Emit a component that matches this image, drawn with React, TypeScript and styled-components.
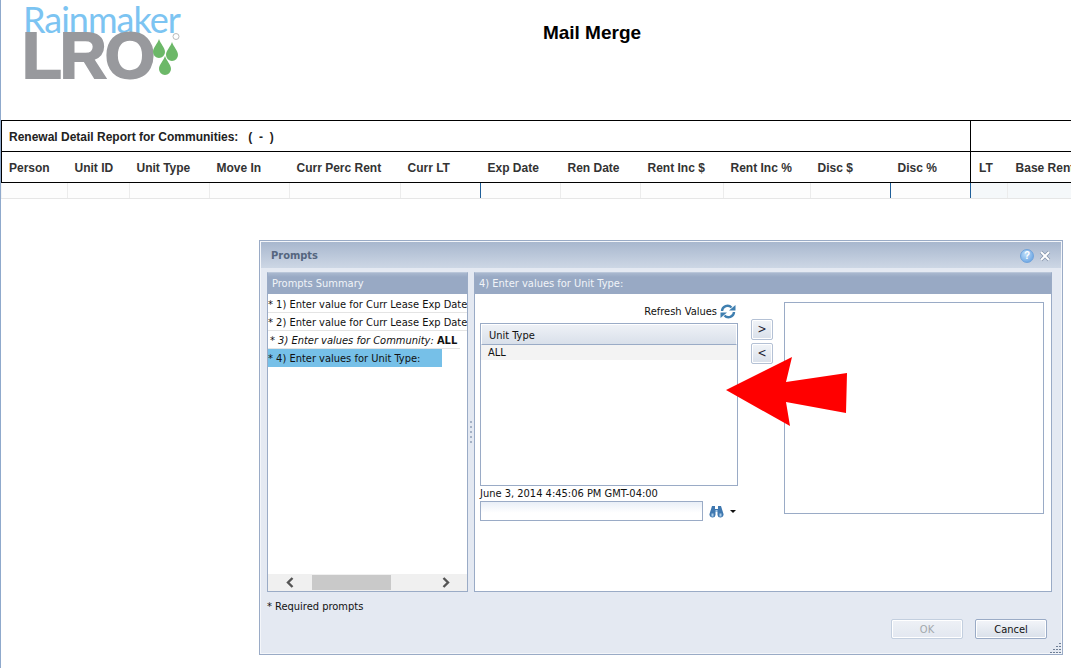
import React from 'react';
import styled, { createGlobalStyle } from 'styled-components';

const GlobalStyle = createGlobalStyle`
  html, body {
    margin: 0;
    padding: 0;
    background: #fff;
    overflow: hidden;
  }
`;

const Page = styled.div`
  position: relative;
  width: 1071px;
  height: 668px;
  box-sizing: border-box;
  border-left: 1px solid #8fa9cc;
  overflow: hidden;
  font-family: 'DejaVu Sans', 'Liberation Sans', sans-serif;
`;

const Header = styled.header`
  display: flex;
  height: 120px;
  box-sizing: border-box;
  padding: 5px 0 0 24px;
`;

const Logo = styled.div`
  width: 160px;
  flex: none;
`;

const LogoTop = styled.div`
  margin-left: -2px;
  font: 400 36px/28px 'Lato', sans-serif;
  color: #7cc4f2;
  letter-spacing: -1px;
  white-space: nowrap;
`;

const LogoBottom = styled.div`
  display: flex;
  align-items: flex-start;
  height: 46px;
`;

const LogoMark = styled.div`
  margin-left: -3px;
  font: 700 65px/46px 'Liberation Sans', sans-serif;
  color: #98999d;
  letter-spacing: -1.9px;
  -webkit-text-stroke: 2px #98999d;
`;

const Drops = styled.svg`
  flex: none;
  width: 32px;
  height: 48px;
  margin-left: -2px;
`;

const Title = styled.h1`
  margin: 17px 0 0 0;
  width: 814px;
  text-align: center;
  font: 700 19px/22px 'Liberation Sans', sans-serif;
  color: #000;
`;

const ReportWrap = styled.div`
  width: 1070px;
  overflow: hidden;
`;

const Report = styled.table`
  width: 1157px;
  table-layout: fixed;
  border-collapse: collapse;
  font: 700 12px/16px 'Liberation Sans', sans-serif;
  color: #333;
`;

const TitleCell = styled.td`
  height: 28px;
  padding: 2px 0 0 7px;
  border: 1px solid #000;
  color: #222;
  white-space: pre;
`;

const HeadCell = styled.td<{ $first?: boolean; $split?: boolean; $tail?: boolean }>`
  height: 28px;
  padding: 2px 0 0 ${(p) => (p.$tail ? '8px' : '7px')};
  border-bottom: 1px solid #000;
  border-left: ${(p) => (p.$first || p.$split ? '1px solid #000' : 'none')};
  white-space: nowrap;
`;

const DataCell = styled.td<{ $mark?: boolean; $tint?: boolean; $first?: boolean }>`
  height: 15px;
  padding: 0;
  border-bottom: 1px solid #e6e6e6;
  border-left: 1px solid ${(p) => (p.$first ? '#f4f4f4' : p.$mark ? '#1f5f99' : '#ececec')};
  background: ${(p) => (p.$tint ? '#f5f8fa' : '#fdfdfd')};
`;

const Dialog = styled.section`
  display: flex;
  flex-direction: column;
  box-sizing: border-box;
  width: 804px;
  height: 415px;
  margin: 41px 0 0 258px;
  border: 1px solid #9aabc6;
  background: #e4e9f2;
  box-shadow: inset 0 0 0 1px #f4f6fa;
  font: 400 11px/14px 'DejaVu Sans', 'Liberation Sans', sans-serif;
  font-stretch: condensed;
  color: #111;
`;

const DialogBar = styled.div`
  display: flex;
  align-items: center;
  box-sizing: border-box;
  height: 26px;
  flex: none;
  margin: 1px 1px 0;
  padding: 1px 10px 0;
  background: linear-gradient(#a8b7ce, #cdd7e5);
`;

const DialogTitle = styled.div`
  flex: 1;
  font-weight: 700;
  color: #55667f;
`;

const HelpIcon = styled.div`
  width: 12px;
  height: 12px;
  border-radius: 50%;
  margin-right: 5px;
  border: 1px solid #6fa3dc;
  background: radial-gradient(circle at 40% 35%, #bcdcf8, #5b9be0);
  color: #fff;
  font: 700 10px/12px 'Liberation Sans', sans-serif;
  text-align: center;
`;

const Panels = styled.div`
  display: flex;
  gap: 6px;
  height: 320px;
  margin: 4px 0 0 7px;
`;

const Panel = styled.div<{ $width: number }>`
  display: flex;
  flex-direction: column;
  box-sizing: border-box;
  width: ${(p) => p.$width}px;
  border: 1px solid #9aabc6;
  border-top-color: #b9c6d9;
  background: #fff;
`;

const PanelHead = styled.div`
  height: 21px;
  flex: none;
  padding-left: 4px;
  background: linear-gradient(#a9b8cf 0, #98a9c4 4px);
  color: #f1f4f8;
  line-height: 21px;
`;

const PromptList = styled.div`
  flex: 1;
  padding-top: 1px;
`;

const PromptRow = styled.div<{ $selected?: boolean; $italic?: boolean }>`
  box-sizing: border-box;
  height: 18px;
  width: ${(p) => (p.$selected ? '174px' : p.$italic ? '192px' : '199px')};
  padding-left: ${(p) => (p.$italic ? '2px' : '0')};
  line-height: 19px;
  white-space: nowrap;
  overflow: hidden;
  background: ${(p) => (p.$selected ? '#76c0e8' : 'transparent')};
  border-bottom: 1px solid ${(p) => (p.$selected ? '#76c0e8' : '#e4e4e4')};
  font-style: ${(p) => (p.$italic ? 'italic' : 'normal')};
`;

const AllValue = styled.b`
  font-style: normal;
`;

const ScrollBar = styled.div`
  display: flex;
  align-items: center;
  height: 17px;
  flex: none;
  background: #f0f0f0;
`;

const ScrollThumb = styled.div`
  width: 79px;
  height: 15px;
  margin-left: 16px;
  background: #c9c9c9;
`;

const ScrollArrow = styled.svg<{ $gap: number }>`
  flex: none;
  margin-left: ${(p) => p.$gap}px;
  width: 11px;
  height: 11px;
`;

const Splitter = styled.svg`
  position: absolute;
  left: 468px;
  top: 420px;
  width: 5px;
  height: 26px;
`;

const ValueArea = styled.div`
  display: flex;
  flex: 1;
  padding-left: 5px;
`;

const PickColumn = styled.div`
  width: 258px;
  flex: none;
`;

const RefreshRow = styled.div`
  display: flex;
  align-items: center;
  justify-content: flex-end;
  gap: 3px;
  height: 27px;
  padding: 4px 2px 0 0;
  box-sizing: border-box;
  margin-top: 2px;
`;

const ListBox = styled.div`
  box-sizing: border-box;
  height: 163px;
  border: 1px solid #9aabc6;
`;

const ListHead = styled.div`
  box-sizing: border-box;
  height: 21px;
  padding-left: 7px;
  border: 1px solid #fff;
  border-bottom: 1px solid #9aabc6;
  background: linear-gradient(#eef1f6, #d9e0ea);
  line-height: 21px;
`;

const ListRow = styled.div`
  height: 15px;
  padding-left: 7px;
  background: #f3f3f3;
  line-height: 16px;
`;

const Stamp = styled.div`
  height: 15px;
  line-height: 15px;
  white-space: nowrap;
`;

const SearchRow = styled.div`
  display: flex;
  align-items: center;
`;

const SearchInput = styled.div`
  box-sizing: border-box;
  width: 223px;
  height: 20px;
  border: 1px solid #9aabc6;
  background: linear-gradient(#e9eff7, #fff 60%);
`;

const SearchIcon = styled.svg`
  flex: none;
  width: 15px;
  height: 13px;
  margin-left: 6px;
`;

const Caret = styled.div`
  width: 0;
  height: 0;
  margin-left: 6px;
  border-left: 3px solid transparent;
  border-right: 3px solid transparent;
  border-top: 3px solid #111;
`;

const MoveColumn = styled.div`
  display: flex;
  flex-direction: column;
  gap: 3px;
  width: 22px;
  flex: none;
  margin: 25px 11px 0 13px;
`;

const MoveButton = styled.div`
  box-sizing: border-box;
  height: 21px;
  border: 1px solid #b4c1d5;
  border-radius: 2px;
  background: linear-gradient(#f1f4f8, #d9e0ea);
  box-shadow: inset 0 0 0 1px #fff;
  text-align: center;
  line-height: 18px;
  font-size: 12px;
  color: #223;
`;

const SelectedBox = styled.div`
  box-sizing: border-box;
  width: 260px;
  height: 212px;
  margin-top: 8px;
  border: 1px solid #9aabc6;
`;

const Required = styled.div`
  margin: 8px 0 0 7px;
`;

const Actions = styled.div`
  display: flex;
  justify-content: flex-end;
  gap: 12px;
  margin: 5px 15px 0 0;
`;

const ActionButton = styled.div<{ $disabled?: boolean }>`
  box-sizing: border-box;
  width: 72px;
  height: 20px;
  border: 1px solid ${(p) => (p.$disabled ? '#c3cfdf' : '#9aabc6')};
  border-radius: 2px;
  background: ${(p) => (p.$disabled ? 'linear-gradient(#eef1f6, #e2e7f0)' : 'linear-gradient(#f3f5f9, #d9e0ea)')};
  box-shadow: inset 0 0 0 1px #fff;
  text-align: center;
  line-height: 19px;
  color: ${(p) => (p.$disabled ? '#a3a8ad' : '#111')};
`;

const Grip = styled.svg`
  position: absolute;
  left: 1049px;
  top: 642px;
  width: 12px;
  height: 12px;
`;

const Arrow = styled.svg`
  position: absolute;
  left: 0;
  top: 0;
  width: 1071px;
  height: 668px;
  pointer-events: none;
`;

const columns = [66, 62, 80, 80, 111, 80, 80, 80, 83, 87, 80, 80, 37, 150];
const labels = [
  'Person', 'Unit ID', 'Unit Type', 'Move In', 'Curr Perc Rent', 'Curr LT', 'Exp Date', 'Ren Date',
  'Rent Inc $', 'Rent Inc %', 'Disc $', 'Disc %', 'LT', 'Base Rent',
];
const marked = ['Exp Date', 'Disc %', 'LT'];

const dropPath = 'M6 0c1.500 5 6 8.500 6 13a6 6 0 0 1-12 0c0-4.500 4.500-8 6-13z';

function App(): React.ReactElement {
  return (
    <Page>
      <GlobalStyle />
      <Header>
        <Logo>
          <LogoTop>Rainmaker</LogoTop>
          <LogoBottom>
            <LogoMark>LRO</LogoMark>
            <Drops viewBox="0 0 32 48">
              <path d={dropPath} fill="#6cb868" transform="translate(1 6)" />
              <path d={dropPath} fill="#6cb868" transform="translate(14 9)" />
              <path d={dropPath} fill="#6cb868" transform="translate(7 23)" />
              <circle cx="24" cy="3.500" r="3" fill="none" stroke="#aaa" strokeWidth="0.8" />
            </Drops>
          </LogoBottom>
        </Logo>
        <Title>Mail Merge</Title>
      </Header>

      <ReportWrap>
        <Report>
          <colgroup>
            {columns.map((w, i) => (
              <col key={i} style={{ width: w }} />
            ))}
          </colgroup>
          <tbody>
            <tr>
              <TitleCell colSpan={12}>{'Renewal Detail Report for Communities:   (  -  )'}</TitleCell>
              <TitleCell colSpan={2} />
            </tr>
            <tr>
              {labels.map((label, i) => (
                <HeadCell key={label} $first={i === 0} $split={label === 'LT'} $tail={i >= 12}>
                  {label}
                </HeadCell>
              ))}
            </tr>
            <tr>
              {labels.map((label, i) => (
                <DataCell key={label} $first={i === 0} $mark={marked.includes(label)} $tint={i >= 12} />
              ))}
            </tr>
          </tbody>
        </Report>
      </ReportWrap>

      <Dialog>
        <DialogBar>
          <DialogTitle>Prompts</DialogTitle>
          <HelpIcon>?</HelpIcon>
          <svg width="12" height="12" viewBox="0 0 12 12">
            <path d="M2 2l8 8M10 2l-8 8" stroke="#8494aa" strokeWidth="3.400" />
            <path d="M2 2l8 8M10 2l-8 8" stroke="#fff" strokeWidth="2" />
          </svg>
        </DialogBar>
        <Panels>
          <Panel $width={201}>
            <PanelHead>Prompts Summary</PanelHead>
            <PromptList>
              <PromptRow>* 1) Enter value for Curr Lease Exp Date</PromptRow>
              <PromptRow>* 2) Enter value for Curr Lease Exp Date</PromptRow>
              <PromptRow $italic>
                * 3) Enter values for Community: <AllValue>ALL</AllValue>
              </PromptRow>
              <PromptRow $selected>* 4) Enter values for Unit Type:</PromptRow>
            </PromptList>
            <ScrollBar>
              <ScrollArrow $gap={17} viewBox="0 0 11 11">
                <path d="M7.500 1L3 5.500 7.500 10" fill="none" stroke="#555" strokeWidth="2.400" />
              </ScrollArrow>
              <ScrollThumb />
              <ScrollArrow $gap={49} viewBox="0 0 11 11">
                <path d="M3.500 1L8 5.500 3.500 10" fill="none" stroke="#555" strokeWidth="2.400" />
              </ScrollArrow>
            </ScrollBar>
          </Panel>
          <Panel $width={578}>
            <PanelHead>4) Enter values for Unit Type:</PanelHead>
            <ValueArea>
              <PickColumn>
                <RefreshRow>
                  Refresh Values
                  <svg width="16" height="15" viewBox="0 0 16 15">
                    <path d="M2 7a5.500 5.500 0 0 1 9.500-3.500" fill="none" stroke="#3f7fb0" strokeWidth="2.400" />
                    <path d="M9 6.500h6.500V1z" fill="#3f7fb0" />
                    <path d="M14 8a5.500 5.500 0 0 1-9.500 3.500" fill="none" stroke="#3f7fb0" strokeWidth="2.400" />
                    <path d="M7 8.500H.5V14z" fill="#3f7fb0" />
                  </svg>
                </RefreshRow>
                <ListBox>
                  <ListHead>Unit Type</ListHead>
                  <ListRow>ALL</ListRow>
                </ListBox>
                <Stamp>June 3, 2014 4:45:06 PM GMT-04:00</Stamp>
                <SearchRow>
                  <SearchInput />
                  <SearchIcon viewBox="0 0 15 13">
                    <path d="M3 1h3v3h3V1h3l2.500 8a3 3 0 1 1-6 1V7H6.500v3a3 3 0 1 1-6-1z" fill="#3f78b0" />
                    <path d="M2.500 8.500h2v3h-2zM10.500 8.500h2v3h-2zM6.500 5h2v2h-2z" fill="#a9cbe8" />
                  </SearchIcon>
                  <Caret />
                </SearchRow>
              </PickColumn>
              <MoveColumn>
                <MoveButton>&gt;</MoveButton>
                <MoveButton>&lt;</MoveButton>
              </MoveColumn>
              <SelectedBox />
            </ValueArea>
          </Panel>
        </Panels>
        <Required>* Required prompts</Required>
        <Actions>
          <ActionButton $disabled>OK</ActionButton>
          <ActionButton>Cancel</ActionButton>
        </Actions>
      </Dialog>

      <Splitter viewBox="0 0 5 26">
        {[1, 6, 11, 16, 21].map((y) => (
          <rect key={y} x="1" y={y} width="2" height="2" fill="#a5b2c6" />
        ))}
      </Splitter>
      <Grip viewBox="0 0 12 12">
        {[[9, 1], [6, 4], [9, 4], [3, 7], [6, 7], [9, 7], [0, 10], [3, 10], [6, 10], [9, 10]].map(([x, y]) => (
          <rect key={`${x}-${y}`} x={x} y={y} width="2" height="1" fill="#6f7f96" />
        ))}
      </Grip>
      <Arrow viewBox="0 0 1071 668">
        <polygon points="725,390 791,357 785,382 846,373 845,413 785,402 789,426" fill="#ff0000" />
      </Arrow>
    </Page>
  );
}

export default App;
